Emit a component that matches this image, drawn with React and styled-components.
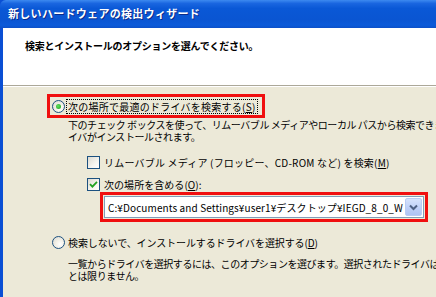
import React from "react";
import styled, { createGlobalStyle } from "styled-components";

const Global = createGlobalStyle`
  html, body { margin: 0; padding: 0; background: #ece9d8; }
  body { overflow: hidden; }
`;

const FONT = `"Noto Sans CJK JP", "Noto Sans", sans-serif`;

const Window = styled.div`
  width: 436px;
  height: 297px;
  overflow: hidden;
  display: flex;
  flex-direction: column;
  font-family: ${FONT};
  background: #0a4fd4;
`;

const TitleBar = styled.div`
  height: 28px;
  flex: none;
  display: flex;
  align-items: center;
  padding-left: 8px;
  border-top-left-radius: 6px;
  background: linear-gradient(
    to bottom,
    #3d8af0 0%,
    #1a66e0 12%,
    #0a58d6 30%,
    #0a55d2 70%,
    #0b5ad9 90%,
    #0c50c8 100%
  );
`;

const Title = styled.span`
  color: #fff;
  font-weight: 700;
  font-size: 11px;
  letter-spacing: 0.3px;
  text-shadow: 1px 1px 0 #0a2a8a;
  white-space: nowrap;
  margin-top: -2px;
`;

const Frame = styled.div`
  flex: 1;
  display: flex;
  flex-direction: column;
  margin-left: 3px;
  background: #ece9d8;
  min-height: 0;
`;

const Header = styled.div`
  height: 58px;
  flex: none;
  background: #fff;
  padding: 10px 0 0 22px;
  box-sizing: border-box;
  border-bottom: 1px solid #aca899;
  box-shadow: 0 1px 0 #fff;
`;

const HeaderText = styled.div`
  font-weight: 700;
  font-size: 10px;
  letter-spacing: -0.25px;
  color: #000;
  white-space: nowrap;
`;

const Body = styled.div`
  flex: 1;
  display: flex;
  flex-direction: column;
  padding: 8px 0 0 44px;
  font-size: 10px;
  color: #000;
  white-space: nowrap;
`;

const Highlight = styled.div`
  border: 3px solid #f00f0f;
  padding: ${(p) => p.$pad || "0 4px 0 2px"};
  display: flex;
  align-items: center;
  align-self: flex-start;
  height: ${(p) => p.$h || "auto"};
  margin-left: ${(p) => p.$ml || "0"};
  margin-top: ${(p) => p.$mt || "0"};
  box-sizing: content-box;
`;

const OptionRow = styled.div`
  display: flex;
  align-items: center;
  height: 13px;
  margin-top: ${(p) => p.$mt || "0"};
  padding-left: ${(p) => p.$pl || "0"};
`;

const Label = styled.span`
  line-height: 13px;
  margin-left: ${(p) => p.$ml || "2px"};
  padding: 0 1px;
  border: 1px ${(p) => (p.$focus ? "dotted #000" : "solid transparent")};
  letter-spacing: ${(p) => p.$ls || "0.05px"};
`;

const U = styled.span`
  text-decoration: underline;
`;

const Desc = styled.div`
  padding-left: 21px;
  margin-top: ${(p) => p.$mt || "0"};
  line-height: 12px;
  letter-spacing: -0.45px;
`;

const Radio = styled.span`
  width: 13px;
  height: 13px;
  flex: none;
  box-sizing: border-box;
  border-radius: 50%;
  border: 1px solid #1c5180;
  background: radial-gradient(circle at 65% 65%, #ffffff 0%, #f3f1e8 40%, #d9d7ce 100%);
  display: flex;
  align-items: center;
  justify-content: center;
  &::after {
    content: "";
    width: 5px;
    height: 5px;
    border-radius: 50%;
    background: radial-gradient(circle at 40% 40%, #5de35d, #1f9c1f);
    display: ${(p) => (p.$checked ? "block" : "none")};
  }
`;

const Check = styled.span`
  width: 13px;
  height: 13px;
  flex: none;
  box-sizing: border-box;
  border: 1px solid #1c5180;
  background: linear-gradient(135deg, #dcdad1 0%, #f6f5f0 60%, #ffffff 100%);
  display: flex;
  align-items: center;
  justify-content: center;
`;

const Combo = styled.div`
  width: 320px;
  height: 22px;
  box-sizing: border-box;
  border: 1px solid #7f9db9;
  background: #fff;
  display: flex;
  align-items: center;
  padding: 1px 1px 1px 2px;
`;

const ComboText = styled.span`
  flex: 1;
  overflow: hidden;
  font-size: 10px;
  letter-spacing: 0.1px;
  padding-left: 1px;
`;

const DropButton = styled.span`
  width: 17px;
  height: 18px;
  flex: none;
  box-sizing: border-box;
  border: 1px solid #b9cdf5;
  border-radius: 2px;
  background: linear-gradient(to bottom, #d6e3fc 0%, #bccff8 60%, #aec4f4 100%);
  display: flex;
  align-items: center;
  justify-content: center;
`;

export default function App() {
  return (
    <>
      <Global />
      <Window>
        <TitleBar>
          <Title>新しいハードウェアの検出ウィザード</Title>
        </TitleBar>
        <Frame>
          <Header>
            <HeaderText>検索とインストールのオプションを選んでください。</HeaderText>
          </Header>
          <Body>
            <Highlight $h="18px">
              <OptionRow>
                <Radio $checked />
                <Label $focus $ml="1px" $ls="0.25px">
                  次の場所で最適のドライバを検索する(<U>S</U>)
                </Label>
              </OptionRow>
            </Highlight>
            <Desc $mt="1px">
              <div>
                下のチェック ボックスを使って、リムーバブル メディアやローカル パスから検索できます。検索された最適のドラ
              </div>
              <div>イバがインストールされます。</div>
            </Desc>
            <OptionRow $mt="13px" $pl="40px">
              <Check />
              <Label $ls="0.2px">
                リムーバブル メディア (フロッピー、CD-ROM など) を検索(<U>M</U>)
              </Label>
            </OptionRow>
            <OptionRow $mt="9px" $pl="40px">
              <Check>
                <svg width="9" height="9" viewBox="0 0 9 9">
                  <path
                    d="M1 4.2 L3.4 6.6 L8 1.8"
                    stroke="#21a121"
                    strokeWidth="1.8"
                    fill="none"
                  />
                </svg>
              </Check>
              <Label>
                次の場所を含める(<U>O</U>):
              </Label>
            </OptionRow>
            <Highlight $pad="1px" $ml="53px" $mt="1px">
              <Combo>
                <ComboText>
                  C:¥Documents and Settings¥user1¥デスクトップ¥IEGD_8_0_W
                </ComboText>
                <DropButton>
                  <svg width="9" height="7" viewBox="0 0 9 7">
                    <path
                      d="M1 1.5 L4.5 5 L8 1.5"
                      stroke="#4d6185"
                      strokeWidth="2"
                      fill="none"
                    />
                  </svg>
                </DropButton>
              </Combo>
            </Highlight>
            <OptionRow $mt="14px" $pl="5px">
              <Radio />
              <Label $ml="1px" $ls="-0.1px">
                検索しないで、インストールするドライバを選択する(<U>D</U>)
              </Label>
            </OptionRow>
            <Desc $mt="9px">
              <div>
                一覧からドライバを選択するには、このオプションを選びます。選択されたドライバは、ハードウェアに最適のもの
              </div>
              <div>とは限りません。</div>
            </Desc>
          </Body>
        </Frame>
      </Window>
    </>
  );
}
